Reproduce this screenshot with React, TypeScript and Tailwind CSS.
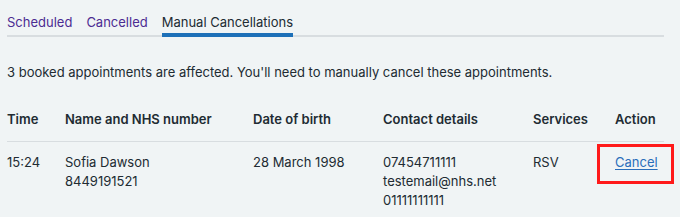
import React from 'react';

type Appointment = {
  time: string;
  name: string;
  nhsNumber: string;
  dob: string;
  contact: string[];
  services: string;
};

const appointments: Appointment[] = [
  {
    time: '15:24',
    name: 'Sofia Dawson',
    nhsNumber: '8449191521',
    dob: '28 March 1998',
    contact: ['07454711111', 'testemail@nhs.net', '01111111111'],
    services: 'RSV',
  },
];

const cols = 'grid grid-cols-[58px_188px_130px_150px_82px_48px]';

const App: React.FC = () => {
  return (
    <div className="min-h-[217px] bg-[#f0f4f5] pl-[7px] pr-[16px] text-[13px] leading-[19px] text-[#212b32] font-['Inter',sans-serif]">
      <div className="flex items-end gap-[14px] border-b-2 border-[#d8dde0] pt-[13px]">
        <a className="-mb-[2px] border-b-4 border-transparent pb-[1px] text-[#4c2c92]" href="#">
          Scheduled
        </a>
        <a className="-mb-[2px] border-b-4 border-transparent pb-[1px] text-[#4c2c92]" href="#">
          Cancelled
        </a>
        <span className="-mb-[2px] border-b-4 border-[#1d70b8] pb-[1px]">Manual Cancellations</span>
      </div>

      <p className="mt-[26px] mb-[16px]">
        3 booked appointments are affected. You'll need to manually cancel these appointments.
      </p>

      <div className={`${cols} border-b border-[#d8dde0] pt-[12px] pb-[12px] font-semibold`}>
        <div>Time</div>
        <div>Name and NHS number</div>
        <div>Date of birth</div>
        <div>Contact details</div>
        <div>Services</div>
        <div>Action</div>
      </div>

      {appointments.map((a) => (
        <div key={a.nhsNumber} className={`${cols} pt-[11px]`}>
          <div>{a.time}</div>
          <div>
            <div>{a.name}</div>
            <div>{a.nhsNumber}</div>
          </div>
          <div>{a.dob}</div>
          <div>
            {a.contact.map((c) => (
              <div key={c}>{c}</div>
            ))}
          </div>
          <div>{a.services}</div>
          <div className="relative">
            <a href="#" className="text-[#2a6ebb] underline underline-offset-2">
              Cancel
            </a>
            <div className="absolute -left-[18px] -top-[9px] h-[40px] w-[77px] border-[3px] border-[#ff1a1a]" />
          </div>
        </div>
      ))}
    </div>
  );
};

export default App;
